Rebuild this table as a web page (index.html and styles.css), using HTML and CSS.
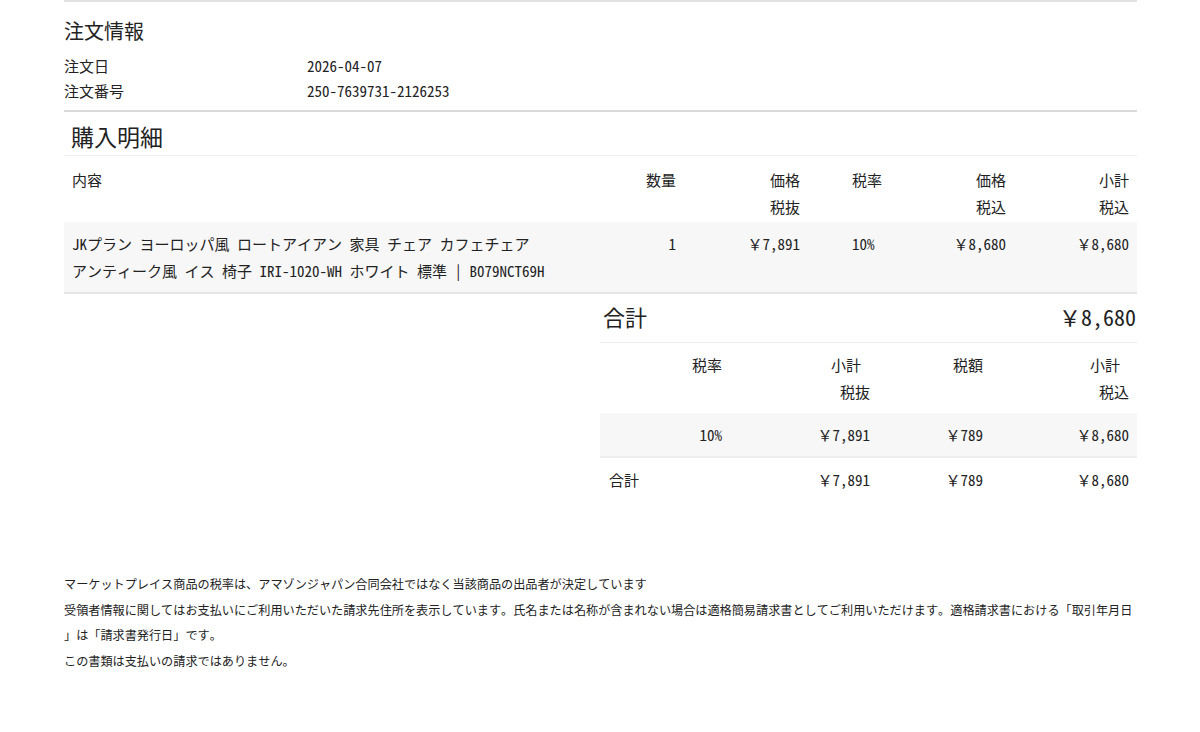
FILE: index.html
```html
<!DOCTYPE html>
<html lang="ja">
<head>
    <meta charset="UTF-8">
    <meta name="viewport" content="width=device-width, initial-scale=1.0">
    <title>注文情報</title>
    <link rel="stylesheet" href="styles.css">
</head>
<body>
    <div class="invoice">
        <section class="order-info">
            <h2 class="section-title">注文情報</h2>
            <dl class="info-list">
                <dt>注文日</dt>
                <dd>2026-04-07</dd>
                <dt>注文番号</dt>
                <dd>250-7639731-2126253</dd>
            </dl>
        </section>

        <section class="details">
            <h2 class="details-title">購入明細</h2>
            <table class="items">
                <thead>
                    <tr>
                        <th class="col-desc">内容</th>
                        <th class="col-qty">数量</th>
                        <th class="col-price">価格<br>税抜</th>
                        <th class="col-rate">税率</th>
                        <th class="col-incl">価格<br>税込</th>
                        <th class="col-sub">小計<br>税込</th>
                    </tr>
                </thead>
                <tbody>
                    <tr>
                        <!-- keep the line break where the original wraps -->
                        <td class="col-desc">JKプラン ヨーロッパ風 ロートアイアン 家具 チェア カフェチェア<br>アンティーク風 イス 椅子 IRI-1020-WH ホワイト 標準 | B079NCT69H</td>
                        <td class="col-qty">1</td>
                        <td class="col-price">￥7,891</td>
                        <td class="col-rate">10%</td>
                        <td class="col-incl">￥8,680</td>
                        <td class="col-sub">￥8,680</td>
                    </tr>
                </tbody>
            </table>

            <div class="summary">
                <div class="grand-total">
                    <span>合計</span>
                    <span>￥8,680</span>
                </div>
                <table class="tax-table">
                    <thead>
                        <tr>
                            <th class="tax-rate">税率</th>
                            <th class="tax-net"><span class="shift">小計</span><br>税抜</th>
                            <th class="tax-amount">税額</th>
                            <th class="tax-gross"><span class="shift">小計</span><br>税込</th>
                        </tr>
                    </thead>
                    <tbody>
                        <tr class="tax-row">
                            <td class="tax-rate">10%</td>
                            <td class="tax-net">￥7,891</td>
                            <td class="tax-amount">￥789</td>
                            <td class="tax-gross">￥8,680</td>
                        </tr>
                        <tr class="tax-total">
                            <td class="tax-label">合計</td>
                            <td class="tax-net">￥7,891</td>
                            <td class="tax-amount">￥789</td>
                            <td class="tax-gross">￥8,680</td>
                        </tr>
                    </tbody>
                </table>
            </div>
        </section>

        <div class="notes">
            <p>マーケットプレイス商品の税率は、アマゾンジャパン合同会社ではなく当該商品の出品者が決定しています</p>
            <p>受領者情報に関してはお支払いにご利用いただいた請求先住所を表示しています。氏名または名称が含まれない場合は適格簡易請求書としてご利用いただけます。適格請求書における「取引年月日」は「請求書発行日」です。</p>
            <p>この書類は支払いの請求ではありません。</p>
        </div>
    </div>
</body>
</html>
```

FILE: styles.css
```css
body {
    margin: 0;
    background-color: #fff;
    color: #222;
    font-family: "Noto Sans Mono CJK JP", "Noto Sans CJK JP", sans-serif;
    font-size: 15px;
    text-autospace: no-autospace;
    text-spacing-trim: space-all;
}
.invoice {
    margin: 0 63px 0 64px;
    border-top: 2px solid #e2e2e2;
}

/* order info */
.order-info {
    padding-bottom: 7px;
    border-bottom: 2px solid #dadada;
}
.section-title {
    margin: 0;
    padding-top: 15px;
    font-size: 20px;
    line-height: 28px;
    font-weight: normal;
}
.info-list {
    margin: 8px 0 0;
    display: grid;
    grid-template-columns: 243px 1fr;
    line-height: 25px;
}
.info-list dd {
    margin: 0;
}

/* purchase details */
.details-title {
    margin: 0;
    padding: 8px 7px 3px;
    font-size: 23px;
    line-height: 32px;
    font-weight: normal;
    border-bottom: 1px solid #ededed;
}
.items {
    width: 100%;
    table-layout: fixed;
    border-collapse: separate;
    border-spacing: 0;
}
.items th {
    padding: 10px 8px 2px;
    line-height: 27px;
    font-weight: normal;
    text-align: right;
    vertical-align: top;
}
.items td {
    padding: 8px;
    line-height: 27px;
    text-align: right;
    vertical-align: top;
    background-color: #f7f7f7;
    border-bottom: 2px solid #e6e6e6;
}
.items .col-desc {
    text-align: left;
}
.col-qty {
    width: 64px;
}
.col-price {
    width: 108px;
}
.items .col-rate {
    width: 54px;
    padding-left: 44px;
    text-align: left;
}
.col-incl {
    width: 84px;
}
.col-sub {
    width: 107px;
}

/* totals */
.summary {
    margin-left: 536px;
}
.grand-total {
    display: flex;
    justify-content: space-between;
    padding: 0 1px 4px 3px;
    font-size: 22px;
    line-height: 44px;
    border-bottom: 1px solid #ececec;
}
.tax-table {
    width: 100%;
    table-layout: fixed;
    border-collapse: separate;
    border-spacing: 0;
}
.tax-table th,
.tax-table td {
    padding: 8px;
    line-height: 27px;
    font-weight: normal;
    text-align: right;
    vertical-align: top;
}
.tax-table .tax-rate {
    width: 114px;
}
.tax-table .tax-net {
    width: 132px;
}
.tax-table .tax-amount {
    width: 97px;
}
.tax-table .shift {
    padding-right: 9px;
}
.tax-row td {
    background-color: #f7f7f7;
    border-bottom: 2px solid #eeeeee;
}
.tax-table .tax-label {
    padding-left: 9px;
    text-align: left;
}

/* notes */
.notes {
    margin-top: 70px;
    font-size: 12.15px;
    line-height: 25.5px;
    line-break: anywhere;
}
.notes p {
    margin: 0;
}
```
